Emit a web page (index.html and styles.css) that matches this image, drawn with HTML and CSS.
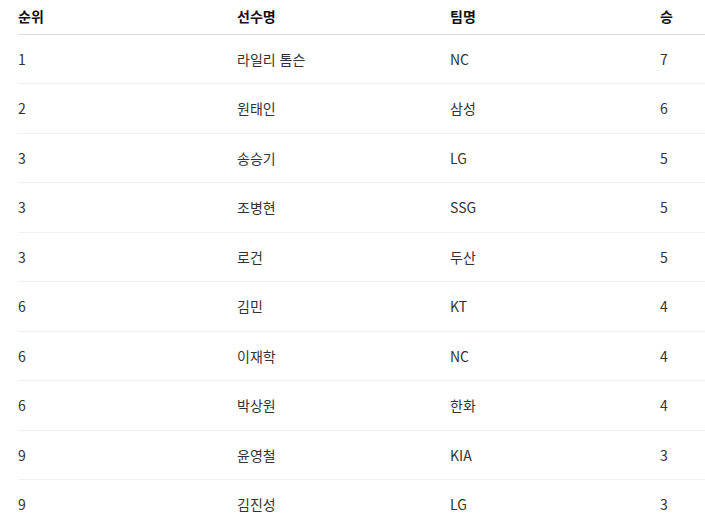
FILE: index.html
```html
<!DOCTYPE html>
<html lang="ko">
<head>
    <meta charset="UTF-8">
    <meta name="viewport" content="width=device-width, initial-scale=1.0">
    <title>다승 순위</title>
    <link rel="stylesheet" href="styles.css">
</head>
<body>
    <main class="rank-wrap">
        <table class="rank-table">
            <colgroup>
                <col class="col-rank">
                <col class="col-name">
                <col class="col-team">
                <col class="col-win">
            </colgroup>
            <thead>
                <tr>
                    <th>순위</th>
                    <th>선수명</th>
                    <th>팀명</th>
                    <th>승</th>
                </tr>
            </thead>
            <tbody>
                <tr><td>1</td><td>라일리 톰슨</td><td>NC</td><td>7</td></tr>
                <tr><td>2</td><td>원태인</td><td>삼성</td><td>6</td></tr>
                <tr><td>3</td><td>송승기</td><td>LG</td><td>5</td></tr>
                <tr><td>3</td><td>조병현</td><td>SSG</td><td>5</td></tr>
                <tr><td>3</td><td>로건</td><td>두산</td><td>5</td></tr>
                <tr><td>6</td><td>김민</td><td>KT</td><td>4</td></tr>
                <tr><td>6</td><td>이재학</td><td>NC</td><td>4</td></tr>
                <tr><td>6</td><td>박상원</td><td>한화</td><td>4</td></tr>
                <tr><td>9</td><td>윤영철</td><td>KIA</td><td>3</td></tr>
                <tr><td>9</td><td>김진성</td><td>LG</td><td>3</td></tr>
            </tbody>
        </table>
    </main>
</body>
</html>
```

FILE: styles.css
```css
body {
    margin: 0;
    padding: 0;
    background-color: #fff;
    font-family: "Noto Sans CJK KR", "Noto Sans", sans-serif;
    font-size: 14px;
    color: #333;
}

.rank-wrap {
    padding-left: 18px;
}

.rank-table {
    width: 687px;
    border-collapse: collapse;
    table-layout: fixed;
}

.col-rank {
    width: 219px;
}

.col-name {
    width: 213px;
}

.col-team {
    width: 210px;
}

th, td {
    padding: 0;
    text-align: left;
    line-height: 18.5px;
}

th {
    padding-top: 7px;
    padding-bottom: 8px;
    font-weight: bold;
    color: #111;
    border-bottom: 1px solid #dcdcdc;
}

td {
    padding-top: 15px;
    padding-bottom: 15px;
    border-bottom: 1px solid #f0f0f0;
}

tbody tr:last-child td {
    border-bottom: none;
}
```
